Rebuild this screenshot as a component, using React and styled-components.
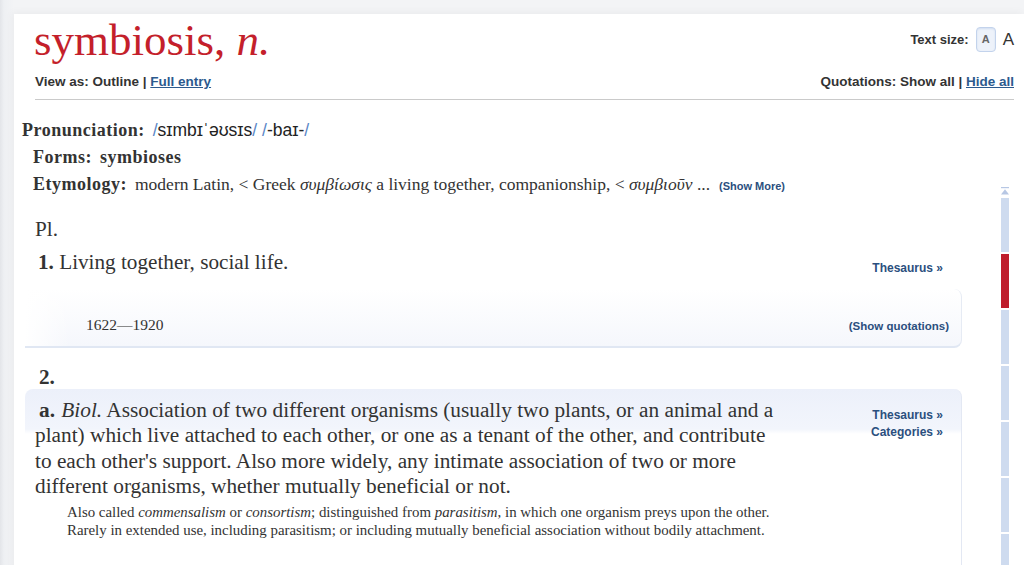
import React from "react";
import styled, { createGlobalStyle } from "styled-components";

const GlobalStyle = createGlobalStyle`
  html, body { margin: 0; padding: 0; }
  body {
    background: #eff0f3;
    font-family: "Liberation Serif", "DejaVu Serif", serif;
    color: #333;
  }
`;

const Frame = styled.div`
  height: 565px;
  overflow: hidden;
  padding: 14px 0 0 14px;
  box-sizing: border-box;
  background: linear-gradient(to right, #e3e5e9 0, #eef0f3 4px, #f3f4f6 14px);
`;

const Panel = styled.div`
  background: #fff;
  min-height: 551px;
  box-shadow: -2px -2px 8px rgba(0, 0, 0, 0.04);
`;

const Header = styled.header`
  padding: 0 10px 0 20px;
`;

const TitleRow = styled.div`
  display: flex;
  justify-content: space-between;
  align-items: flex-start;
`;

const Title = styled.h1`
  margin: 0;
  font: 400 45px/52px "Liberation Serif", serif;
  color: #c41f2b;
  em { font-style: italic; }
`;

const TextSize = styled.div`
  display: flex;
  align-items: center;
  gap: 7px;
  margin-top: 13px;
  font: 700 13px/16px "Liberation Sans", Arial, sans-serif;
  color: #333;
`;

const SizeBox = styled.button`
  width: 20px;
  height: 25px;
  padding: 0;
  border: 1px solid #c3d3ec;
  border-radius: 4px;
  background: #edf2fa;
  box-shadow: inset 0 1px 2px rgba(160, 185, 225, 0.35);
  font: 700 11px/1 "Liberation Sans", Arial, sans-serif;
  color: #666;
`;

const BigA = styled.span`
  font: 400 17px/1 "Liberation Sans", Arial, sans-serif;
  color: #333;
`;

const SubRow = styled.div`
  display: flex;
  justify-content: space-between;
  margin-top: 8px;
  padding-left: 1px;
  font: 700 13.5px/16px "Liberation Sans", Arial, sans-serif;
  color: #333;
`;

const Link = styled.a`
  color: #2c5a8e;
  text-decoration: underline;
`;

const Rule = styled.hr`
  margin: 9px 10px 0 21px;
  border: 0;
  border-top: 1px solid #cacaca;
`;

const Body = styled.div`
  display: flex;
`;

const Main = styled.main`
  flex: 1;
  min-width: 0;
`;

const Meta = styled.div`
  padding: 17px 0 0 8px;
`;

const MetaRow = styled.div`
  font-size: 17.5px;
  line-height: 27px;
  padding-left: ${(p) => p.$indent || 0}px;
  white-space: nowrap;
`;

const Label = styled.strong`
  font-size: 18px;
  letter-spacing: 0.5px;
  margin-right: 8px;
`;

const Strong = styled.strong`
  font-size: 18px;
  letter-spacing: 0.5px;
`;

const Ipa = styled.span`
  font: 400 17.5px "Liberation Sans", "DejaVu Sans", sans-serif;
  color: #222;
`;

const Slash = styled.span`
  color: #5a86c6;
`;

const ShowMore = styled.a`
  margin-left: 9px;
  font: 700 11px "Liberation Sans", Arial, sans-serif;
  color: #2b4f7e;
  text-decoration: none;
`;

const Senses = styled.section`
  margin: 18px 28px 0 11px;
`;

const Pl = styled.div`
  padding-left: 10px;
  font-size: 21.2px;
  line-height: 26px;
`;

const SenseRow = styled.div`
  display: flex;
  margin-top: 7px;
  padding-left: 13px;
`;

const SenseText = styled.div`
  flex: 1;
  font-size: 21.2px;
  line-height: 26px;
`;

const SideLinks = styled.div`
  display: flex;
  flex-direction: column;
  align-items: flex-end;
  margin-left: auto;
  padding-top: ${(p) => p.$top}px;
  padding-right: ${(p) => p.$right}px;
  font: 700 12px/17px "Liberation Sans", Arial, sans-serif;
  a { color: #2b4f7e; text-decoration: none; }
`;

const QuoteBox = styled.div`
  display: flex;
  justify-content: space-between;
  align-items: baseline;
  margin-top: 12px;
  padding: 27px 12px 11px 61px;
  background:
    linear-gradient(to right, #fff 0, rgba(255, 255, 255, 0) 45px),
    linear-gradient(to bottom, #fff 0, #f5f7fc 100%);
  border-right: 1px solid #e6ebf4;
  border-bottom: 2px solid #e0e7f3;
  border-radius: 0 8px 8px 0;
`;

const Dates = styled.span`
  font-size: 15.5px;
  line-height: 18px;
`;

const QuoteLink = styled.a`
  font: 700 11.5px/18px "Liberation Sans", Arial, sans-serif;
  color: #2b4f7e;
  text-decoration: none;
`;

const SenseNum = styled.div`
  margin-top: 17px;
  padding-left: 14px;
  font-weight: 700;
  font-size: 21.2px;
  line-height: 24px;
`;

const SenseBox = styled.div`
  display: flex;
  min-height: 200px;
  padding: 9px 0 0 10px;
  border-radius: 8px 8px 0 0;
  border-right: 1px solid #e3e8f3;
  background: linear-gradient(to bottom, #ecf0fa 0, #f2f5fc 40px, #fff 45px);
`;

const Definition = styled.div`
  width: 750px;
`;

const DefText = styled.p`
  margin: 0;
  font-size: 21.3px;
  line-height: 25.6px;
`;

const DefLabel = styled.strong`
  padding-left: 4px;
  padding-right: 1px;
`;

const Note = styled.div`
  margin: 3px 0 0 32px;
  font-size: 14.9px;
  line-height: 18px;
`;

const NoteLine = styled.span`
  display: block;
  white-space: nowrap;
`;

const NavStrip = styled.nav`
  display: flex;
  flex-direction: column;
  gap: 2px;
  flex-shrink: 0;
  width: 8px;
  margin: 87px 15px 0 11px;
`;

const NavArrow = styled.svg`
  display: block;
  width: 8px;
  height: 8px;
  margin-bottom: 1px;
`;

const Segment = styled.div`
  height: 54px;
  background: ${(p) => (p.$active ? "#bf1d2c" : "#cedbef")};
`;

export default function App() {
  return (
    <>
      <GlobalStyle />
      <Frame>
        <Panel>
          <Header>
            <TitleRow>
              <Title>
                symbiosis, <em>n.</em>
              </Title>
              <TextSize>
                <span>Text size:</span>
                <SizeBox>A</SizeBox>
                <BigA>A</BigA>
              </TextSize>
            </TitleRow>
            <SubRow>
              <span>
                View as: Outline | <Link href="#">Full entry</Link>
              </span>
              <span>
                Quotations: Show all | <Link href="#">Hide all</Link>
              </span>
            </SubRow>
          </Header>
          <Rule />
          <Body>
            <Main>
              <Meta>
                <MetaRow>
                  <Label>Pronunciation:</Label>
                  <Ipa>
                    <Slash>/</Slash>sɪmbɪˈəʊsɪs<Slash>/</Slash> <Slash>/</Slash>-baɪ-<Slash>/</Slash>
                  </Ipa>
                </MetaRow>
                <MetaRow $indent={11}>
                  <Label>Forms:</Label>
                  <Strong>symbioses</Strong>
                </MetaRow>
                <MetaRow $indent={11}>
                  <Label>Etymology:</Label>
                  modern Latin, &lt; Greek <em>συμβίωσις</em> a living together, companionship, &lt;{" "}
                  <em>συμβιοῦν</em> ...
                  <ShowMore href="#">(Show More)</ShowMore>
                </MetaRow>
              </Meta>
              <Senses>
                <Pl>Pl.</Pl>
                <SenseRow>
                  <SenseText>
                    <strong>1.</strong> Living together, social life.
                  </SenseText>
                  <SideLinks $top={10.5} $right={19}>
                    <a href="#">Thesaurus »</a>
                  </SideLinks>
                </SenseRow>
                <QuoteBox>
                  <Dates>1622—1920</Dates>
                  <QuoteLink href="#">(Show quotations)</QuoteLink>
                </QuoteBox>
                <SenseNum>2.</SenseNum>
                <SenseBox>
                  <Definition>
                    <DefText>
                      <DefLabel>a.</DefLabel> <em>Biol.</em> Association of two different organisms
                      (usually two plants, or an animal and a plant) which live attached to each
                      other, or one as a tenant of the other, and contribute to each other's
                      support. Also more widely, any intimate association of two or more different
                      organisms, whether mutually beneficial or not.
                    </DefText>
                    <Note>
                      <NoteLine>
                        Also called <em>commensalism</em> or <em>consortism</em>; distinguished from{" "}
                        <em>parasitism</em>, in which one organism preys upon the other.
                      </NoteLine>
                      <NoteLine>
                        Rarely in extended use, including parasitism; or including mutually
                        beneficial association without bodily attachment.
                      </NoteLine>
                    </Note>
                  </Definition>
                  <SideLinks $top={9.5} $right={18}>
                    <a href="#">Thesaurus »</a>
                    <a href="#">Categories »</a>
                  </SideLinks>
                </SenseBox>
              </Senses>
            </Main>
            <NavStrip>
              <NavArrow viewBox="0 0 8 8">
                <rect x="0" y="0" width="8" height="1.2" fill="#b7c7e4" />
                <polygon points="0,7.5 4,2.2 8,7.5" fill="#b7c7e4" />
              </NavArrow>
              <Segment />
              <Segment $active />
              <Segment />
              <Segment />
              <Segment />
              <Segment />
              <Segment />
            </NavStrip>
          </Body>
        </Panel>
      </Frame>
    </>
  );
}
